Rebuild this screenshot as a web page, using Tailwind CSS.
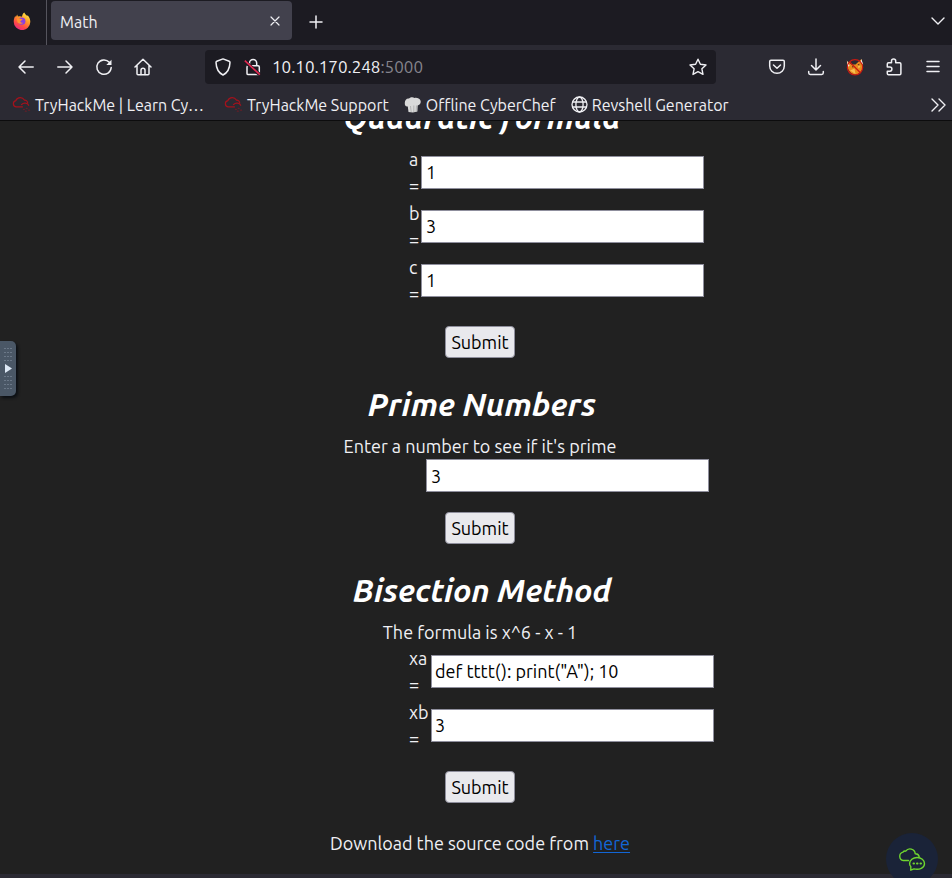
<!DOCTYPE html>
<html lang="en">
<head>
<meta charset="utf-8">
<meta name="viewport" content="width=device-width, initial-scale=1">
<title>Math</title>
<script src="https://cdn.jsdelivr.net/npm/@tailwindcss/browser@4"></script>
</head>
<body class="relative flex h-screen flex-col overflow-hidden bg-[#212121] font-['Ubuntu','Noto_Sans',sans-serif] text-base text-[#f0f0f4]">

<svg class="hidden" aria-hidden="true">
  <symbol id="thm" viewBox="0 0 20 18" fill="none" stroke="#a3121c" stroke-width="1.3" stroke-linecap="round">
    <path d="M11 11H4.500a3.400 3.400 0 0 1-.4-6.700A5 5 0 0 1 13 3.800a3.200 3.200 0 0 1 3.500 3.200"/>
    <path d="M10 8.500c2-2.400 6.500-2 7.500.8"/>
    <path d="M12 13.500h1M15 12.500h1M14 15.500h1M17.500 14.500h1" stroke-opacity=".5"/>
  </symbol>
</svg>

<header class="shrink-0 border-b border-[#0c0c0d] bg-[#2b2a33]">
  <div class="flex h-[45px] items-stretch bg-[#1c1b22]">
    <div class="flex w-[47px] items-center justify-center border-r border-[#55545d] pb-1 pr-[3px]">
      <svg class="size-[18px]" viewBox="0 0 20 20" aria-label="Firefox" role="img">
        <defs>
          <linearGradient id="fx" x1=".8" y1="0" x2=".25" y2="1"><stop offset="0" stop-color="#fff04a"/><stop offset=".4" stop-color="#ff9a28"/><stop offset=".72" stop-color="#ff4a45"/><stop offset="1" stop-color="#e5268b"/></linearGradient>
        </defs>
        <path fill="url(#fx)" d="M12.500.6c.7 1.700 2.300 2.700 3.300 3.900l.5-1c2 2.200 3 4.600 2.900 7.500a9.200 9.200 0 0 1-18.400-.2C.8 8.300 1.500 6 2.700 4.200l.4 1.600 1.500-3 .9 2.300c1.800-.8 3.500-.6 4.500.3.300-2 1-3.800 2.500-4.800z"/>
        <circle cx="9.800" cy="10.200" r="4" fill="#8a3fe0"/>
        <path fill="#ff9330" d="M4.200 7.500c1.800-.9 3.400-.5 4.700.3l1.700.2c-.3 1.200-1.500 1.500-2.600 1.900.3 1.700 1.700 2.300 3.200 2-1.300 1.700-5.300 1.400-6.300-.9z"/>
      </svg>
    </div>
    <div class="ml-1 mt-px mb-[5px] flex w-[241px] items-center justify-between rounded bg-[#42414d] pl-[9px] pr-[11px]">
      <span class="pt-[2px]">Math</span>
      <button type="button" aria-label="Close tab"><svg class="size-3" viewBox="0 0 12 12" stroke="currentColor" stroke-width="1.200" stroke-linecap="round"><path d="M2 2l8 8M10 2l-8 8"/></svg></button>
    </div>
    <button type="button" aria-label="New tab" class="ml-4 pb-[2px]"><svg class="size-4" viewBox="0 0 16 16" stroke="currentColor" stroke-width="1.500" stroke-linecap="round"><path d="M2 8h12M8 2v12"/></svg></button>
    <button type="button" aria-label="List all tabs" class="ml-auto mr-[6px] pb-1"><svg class="size-4" viewBox="0 0 16 16" fill="none" stroke="currentColor" stroke-width="1.400" stroke-linecap="round" stroke-linejoin="round"><path d="M2 5l6 6 6-6"/></svg></button>
  </div>

  <div class="flex h-11 items-center pl-[6px]">
    <nav class="flex" aria-label="Navigation">
      <button type="button" aria-label="Back" class="flex w-[39px] justify-center"><svg class="size-[18px]" viewBox="0 0 18 18" fill="none" stroke="currentColor" stroke-width="1.500" stroke-linecap="round" stroke-linejoin="round"><path d="M16.200 9H2M8 3L2 9l6 6"/></svg></button>
      <button type="button" aria-label="Forward" class="flex w-[39px] justify-center"><svg class="size-[18px]" viewBox="0 0 18 18" fill="none" stroke="currentColor" stroke-width="1.500" stroke-linecap="round" stroke-linejoin="round"><path d="M1.800 9H16M10 3l6 6-6 6"/></svg></button>
      <button type="button" aria-label="Reload" class="flex w-[39px] justify-center"><svg class="size-[18px]" viewBox="0 0 18 18" fill="none" stroke="currentColor" stroke-width="1.500" stroke-linecap="round"><path d="M14.300 4.200A7.200 7.200 0 1 0 16.200 9.500"/><path d="M16.500 1.800v5.200h-5.200z" fill="currentColor" stroke="none"/></svg></button>
      <button type="button" aria-label="Home" class="flex w-[39px] justify-center"><svg class="size-[18px]" viewBox="0 0 18 18" fill="none" stroke="currentColor" stroke-width="1.500" stroke-linecap="round" stroke-linejoin="round"><path d="M1 9L9 1.300 17 9M3 7.500v8.200c0 .7.400 1 1 1h10c.6 0 1-.3 1-1V7.500"/><path d="M7 16.500v-4.300a2 2 0 0 1 4 0v4.300"/></svg></button>
    </nav>
    <div class="ml-[43px] mr-[41px] flex h-[34px] flex-1 items-center rounded bg-[#1c1b22] px-[9px]">
      <svg class="size-[18px]" viewBox="0 0 18 18" fill="none" stroke="currentColor" stroke-width="1.500" stroke-linejoin="round" role="img" aria-label="Protection"><path d="M9 .9l6.200 2.400c.5.200.8.600.8 1.100C15.800 9.800 14.400 14.400 9 17 3.600 14.400 2.200 9.800 2 4.400c0-.5.300-.9.800-1.100z"/></svg>
      <svg class="ml-3 size-[18px]" viewBox="0 0 18 18" fill="none" stroke="currentColor" stroke-width="1.500" role="img" aria-label="Connection is not secure"><path d="M5.500 7.500V5a3.600 3.600 0 0 1 7.200 0v2.500"/><rect x="3" y="7.800" width="12.300" height="8.800" rx="1.200"/><path d="M1 3.500l14.500 13" stroke="#1c1b22" stroke-width="3.600"/><path d="M.8 2.600l15 14" stroke="#e22850" stroke-width="1.600"/></svg>
      <div role="textbox" aria-label="Address" class="ml-[10px] flex-1 text-[17px]">10.10.170.248<span class="text-[#85848c]">:5000</span></div>
      <button type="button" aria-label="Bookmark this page"><svg class="size-[18px]" viewBox="0 0 18 18" fill="none" stroke="currentColor" stroke-width="1.400" stroke-linejoin="round"><path d="M9 1.200l2.400 5.100 5.600.7-4.100 3.800 1.100 5.600L9 13.700l-5 2.700 1.100-5.600L1 7l5.600-.7z"/></svg></button>
    </div>
    <div class="flex">
      <button type="button" aria-label="Save to Pocket" class="flex w-[39px] justify-center"><svg class="size-[18px]" viewBox="0 0 18 18" fill="none" stroke="currentColor" stroke-width="1.500" stroke-linecap="round" stroke-linejoin="round"><path d="M3 2.300h12c.8 0 1.300.5 1.300 1.300V8a7.300 7.300 0 0 1-14.600 0V3.600c0-.8.500-1.300 1.300-1.300z"/><path d="M5.500 7L9 10.300 12.500 7"/></svg></button>
      <button type="button" aria-label="Downloads" class="flex w-[39px] justify-center"><svg class="size-[18px]" viewBox="0 0 18 18" fill="none" stroke="currentColor" stroke-width="1.500" stroke-linecap="round" stroke-linejoin="round"><path d="M9 1v10.800M4.500 7.500L9 12l4.500-4.500M1.700 13.500v1.300c0 1 .6 1.600 1.600 1.600h11.400c1 0 1.600-.6 1.600-1.600v-1.300"/></svg></button>
      <button type="button" aria-label="FoxyProxy" class="flex w-[39px] justify-center"><svg class="size-[18px]" viewBox="0 0 18 18"><path fill="#e98a1e" d="M1 3l4.500 3.500h4L15.500 1l1.300 6.500c.4 4-2.300 8-6.300 9-4 .4-7.300-2.500-8.500-6z"/><path fill="#f4efe8" d="M.8 2.500l2.800 5.200-1.700 1zM15.300 1l1.900 5.500-2.700-2z"/><path fill="#f6c253" d="M4 12.500l4.500-2 1 5.500zM12 7.500l2.500 1-2 2z"/><path fill="#573117" d="M6 8l2.500 1-2.300.6zM11.500 6.500l2.200-.8-.9 1.800z"/><circle cx="9" cy="9.300" r="7.700" fill="none" stroke="#c91913" stroke-width="1.200"/><path d="M3.600 3.900l10.800 10.800" stroke="#c91913" stroke-width="1.300"/></svg></button>
      <button type="button" aria-label="Extensions" class="flex w-[39px] justify-center"><svg class="size-[18px]" viewBox="0 0 18 18" fill="none" stroke="currentColor" stroke-width="1.500" stroke-linejoin="round"><path d="M2.300 8V6c0-.7.500-1.200 1.200-1.200H6.500V3a2.100 2.100 0 0 1 4.200 0v1.800h4c.7 0 1.200.5 1.200 1.200v9.600c0 .7-.5 1.200-1.200 1.200H3.500c-.7 0-1.200-.5-1.200-1.200v-2.400h2.500a2.100 2.100 0 0 0 0-4.200H2.300z"/></svg></button>
      <button type="button" aria-label="Open application menu" class="flex w-[39px] justify-center"><svg class="size-[18px]" viewBox="0 0 18 18" stroke="currentColor" stroke-width="1.500" stroke-linecap="round"><path d="M3 3.500h12M3 8.500h12M3 13.500h12"/></svg></button>
    </div>
  </div>

  <nav class="flex h-[31px] items-center pl-3 pr-[6px] whitespace-nowrap" aria-label="Bookmarks">
    <a href="#" class="flex items-center gap-1"><svg class="h-[18px] w-[19px]"><use href="#thm"/></svg>TryHackMe | Learn Cy…</a>
    <a href="#" class="ml-5 flex items-center gap-1"><svg class="h-[18px] w-[19px]"><use href="#thm"/></svg>TryHackMe Support</a>
    <a href="#" class="ml-[15px] flex items-center gap-1"><svg class="size-[18px]" viewBox="0 0 18 18"><path fill="#d9d9d9" d="M4.500 16l-.7-5.500C1.500 10.800.6 9 .8 6.800 1 4 2.500 2.300 5 2.600 6.500 1 9 .7 10.500 2c2.500-.5 5 .3 6 2.500.8 2-.3 4.500-2.800 5l-.3 6-4.500 1z"/><path fill="none" stroke="#aaa" stroke-width=".8" d="M6.500 10l.7 6M9.800 9.500v6.500M12.500 9.500l-.3 6"/></svg>Offline CyberChef</a>
    <a href="#" class="ml-[15px] flex items-center gap-1"><svg class="size-[17px]" viewBox="0 0 17 17" fill="none" stroke="currentColor" stroke-width="1.300"><circle cx="8.500" cy="8.500" r="7.500"/><ellipse cx="8.500" cy="8.500" rx="3.600" ry="7.500"/><path d="M1.500 6h14M1.500 11h14"/></svg>Revshell Generator</a>
    <button type="button" aria-label="More bookmarks" class="ml-auto"><svg class="size-4" viewBox="0 0 16 16" fill="none" stroke="currentColor" stroke-width="1.400" stroke-linecap="round" stroke-linejoin="round"><path d="M2 2l6 6-6 6M9 2l6 6-6 6"/></svg></button>
  </nav>
</header>

<main class="min-h-0 flex-1 overflow-hidden pl-2 text-center text-lg leading-[26px]">
  <section class="-mt-6">
    <h2 class="pl-1 text-[32px] font-semibold italic leading-10 text-white">Quadratic formula</h2>
    <form class="mt-[9px]">
      <div class="mx-auto flex w-[142px] flex-col gap-[2px] text-left">
        <div class="flex items-center gap-[2px]"><label for="qa" class="w-[10px] shrink-0">a =</label><input id="qa" value="1" class="h-[33px] w-[283px] shrink-0 border border-[#8f8f9d] bg-white px-1 text-black"></div>
        <div class="flex items-center gap-[2px]"><label for="qb" class="w-[10px] shrink-0">b =</label><input id="qb" value="3" class="h-[33px] w-[283px] shrink-0 border border-[#8f8f9d] bg-white px-1 text-black"></div>
        <div class="flex items-center gap-[2px]"><label for="qc" class="w-[10px] shrink-0">c =</label><input id="qc" value="1" class="h-[33px] w-[283px] shrink-0 border border-[#8f8f9d] bg-white px-1 text-black"></div>
      </div>
      <button type="button" class="mx-auto mt-5 block h-8 w-[70px] rounded border border-[#8f8f9d] bg-[#e9e9ed] leading-6 text-black">Submit</button>
    </form>
  </section>

  <section class="mt-[26px]">
    <h2 class="pl-1 text-[32px] font-semibold italic leading-10 text-white">Prime Numbers</h2>
    <form class="mt-[9px]">
      <label for="prime" class="block">Enter a number to see if it's prime</label>
      <div class="mx-auto flex w-[142px] pl-[17px]"><input id="prime" value="3" class="h-[33px] w-[283px] shrink-0 border border-[#8f8f9d] bg-white px-1 text-black"></div>
      <button type="button" class="mx-auto mt-5 block h-8 w-[70px] rounded border border-[#8f8f9d] bg-[#e9e9ed] leading-6 text-black">Submit</button>
    </form>
  </section>

  <section class="mt-[26px]">
    <h2 class="pl-1 text-[32px] font-semibold italic leading-10 text-white">Bisection Method</h2>
    <p class="mt-[9px]">The formula is x^6 - x - 1</p>
    <form>
      <div class="mx-auto flex w-[142px] flex-col gap-[2px] text-left">
        <div class="flex items-center gap-[2px]"><label for="xa" class="w-5 shrink-0">xa =</label><input id="xa" value="def tttt(): print(&quot;A&quot;); 10" class="h-[33px] w-[283px] shrink-0 border border-[#8f8f9d] bg-white px-[3px] text-black"></div>
        <div class="flex items-center gap-[2px]"><label for="xb" class="w-5 shrink-0">xb =</label><input id="xb" value="3" class="h-[33px] w-[283px] shrink-0 border border-[#8f8f9d] bg-white px-[3px] text-black"></div>
      </div>
      <button type="button" class="mx-auto mt-5 block h-8 w-[70px] rounded border border-[#8f8f9d] bg-[#e9e9ed] leading-6 text-black">Submit</button>
    </form>
  </section>

  <p class="mt-[27px]">Download the source code from <a href="#" class="text-[#1266d6] underline underline-offset-2">here</a></p>
</main>

<footer class="h-1 shrink-0 bg-[#2b2a33]"></footer>

<button type="button" aria-label="Open side panel" class="absolute left-0 top-[341px] flex h-[55px] w-4 items-center justify-center rounded-r-[5px] bg-[#4a5766] shadow-[2px_2px_3px_#0b0f14]">
  <svg class="h-[46px] w-3" viewBox="0 0 12 46" fill="none" stroke="#6b7888" stroke-width="1">
    <path stroke-dasharray="2 1" d="M2 2.500h8M2 6.500h8M2 10.500h8M2 14.500h8M2 30.500h8M2 34.500h8M2 38.500h8M2 42.500h8"/>
    <path d="M3 18l7 4.500L3 27z" fill="#dde8f5" stroke="none"/>
  </svg>
</button>

<button type="button" aria-label="Open chat" class="absolute -bottom-[7px] right-[14px] flex size-[52px] items-center justify-center rounded-full bg-[#1a2338]">
  <svg class="h-6 w-7" viewBox="0 0 28 24" fill="none" stroke="#6fd52f" stroke-width="1.400" stroke-linecap="round" stroke-linejoin="round">
    <path d="M10.500 13.500H5.300a4.300 4.300 0 0 1-.3-8.400 2.500 2.500 0 0 1 2.700-.9 5.200 5.200 0 0 1 9.500 2.500 3.800 3.800 0 0 1 4 3.200"/>
    <path d="M12.800 19.500v3.700l3.200-1.300c5.500 1.300 10.500-1.200 10.500-5.200 0-3.600-3.300-6.200-7.400-6.200s-7.500 2.700-7.500 6c0 1.200.4 2.200 1.200 3z"/>
    <path d="M15.500 16.500h.5M19 16.500h.5M22.500 16.500h.5" stroke-width="2"/>
  </svg>
</button>
</body>
</html>
